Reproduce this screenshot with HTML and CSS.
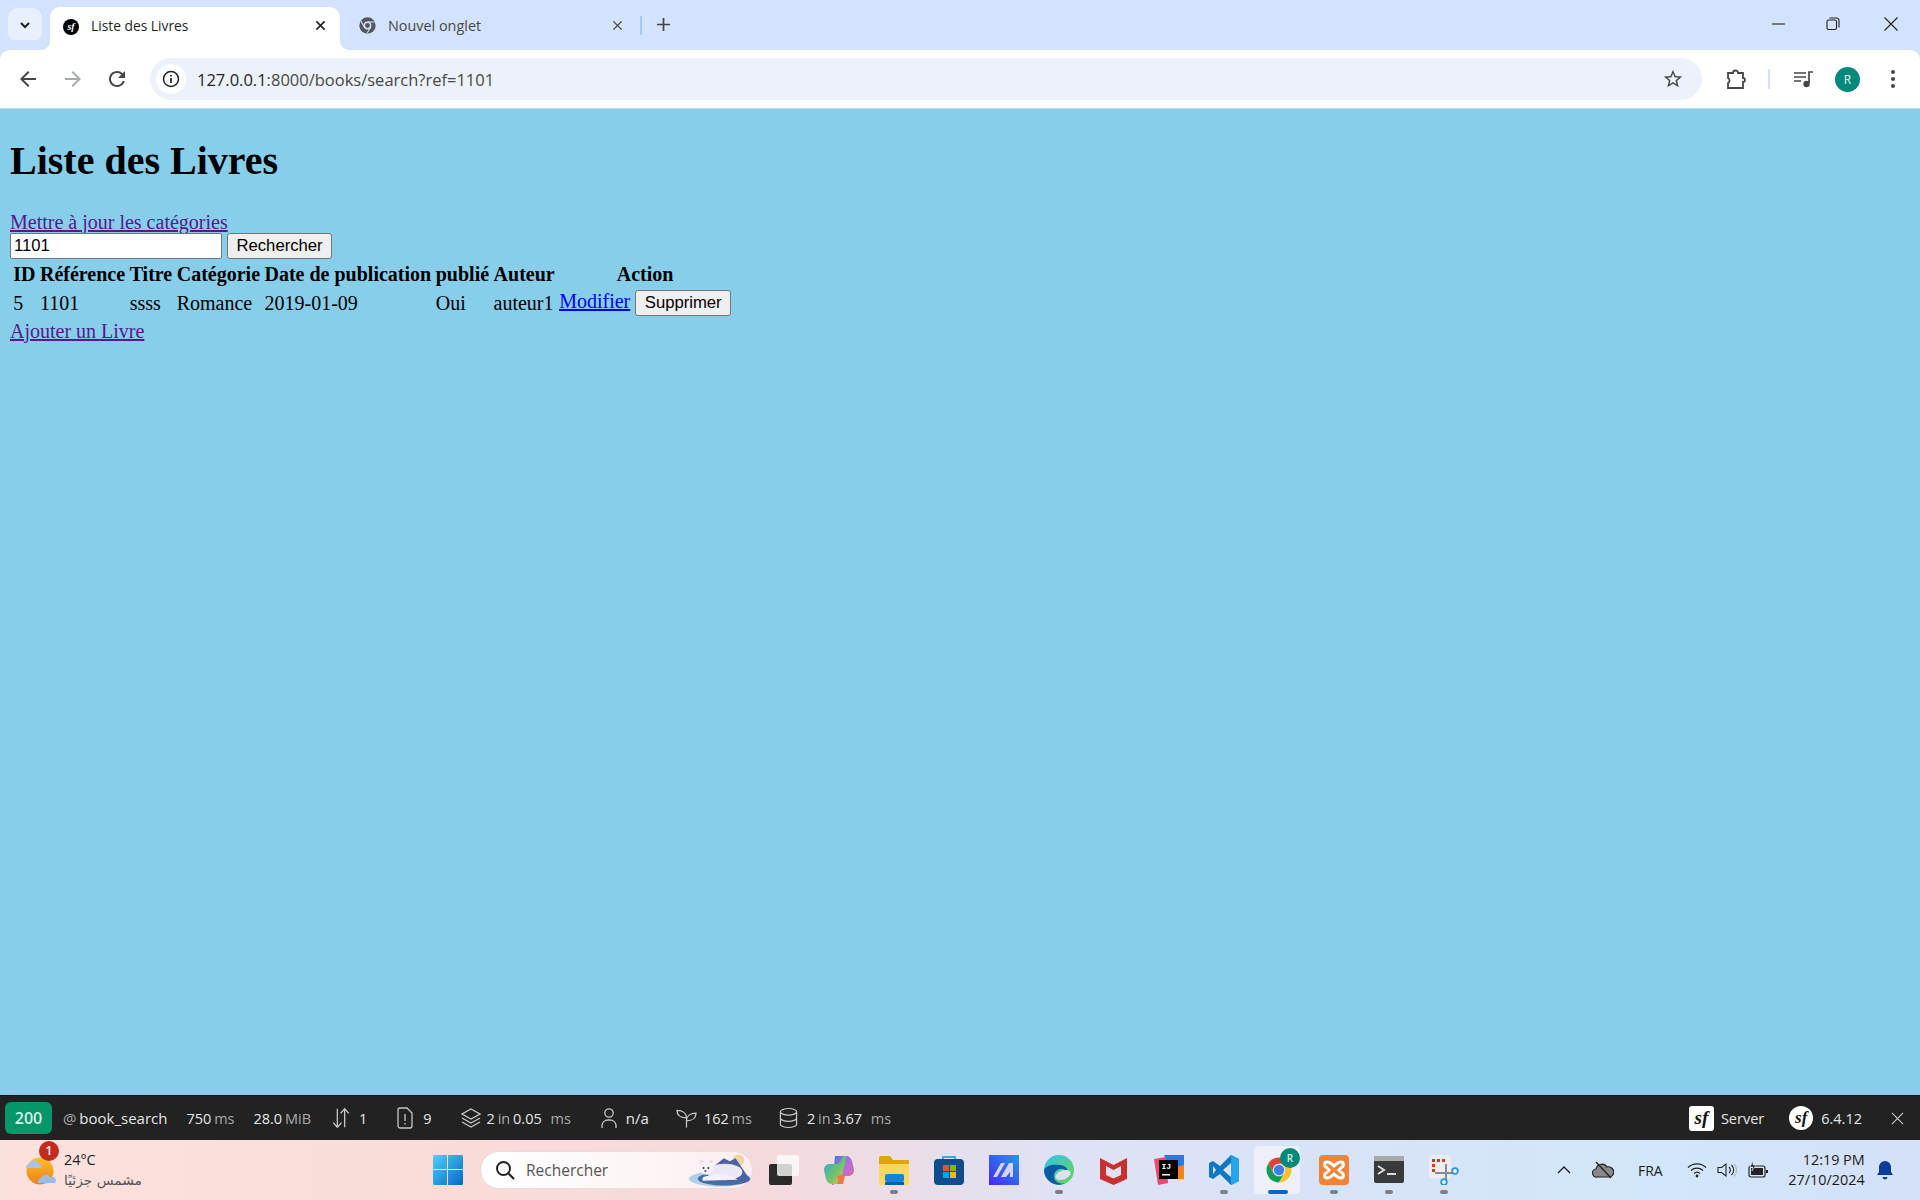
FILE: index.html
```html
<!DOCTYPE html>
<html lang="fr">
<head>
<meta charset="utf-8">
<title>Liste des Livres</title>
<link rel="stylesheet" href="styles.css">
</head>
<body>
<div class="tabstrip">
  <div class="tabsearch"><svg class="ic14" viewBox="0 0 14 14"><path d="M3 5l4 4 4-4" fill="none" stroke="#1f1f1f" stroke-width="2"/></svg></div>
  <div class="tab active">
    <span class="favicon">sf</span>
    <span class="tabtitle">Liste des Livres</span>
    <svg class="tabclose" viewBox="0 0 12 12"><path d="M1.5 1.5l9 9M10.5 1.5l-9 9" stroke="#1f1f1f" stroke-width="1.7"/></svg>
  </div>
  <div class="tab second">
    <svg class="chromefav" viewBox="0 0 24 24"><circle cx="12" cy="12" r="11.500" fill="#54585c"/><circle cx="12" cy="12" r="5.500" fill="#d3e3fd"/><circle cx="12" cy="12" r="3.500" fill="#54585c"/><path d="M12 7h10M7.700 14.500L2.800 6M16.300 14.500L11.400 23" stroke="#d3e3fd" stroke-width="1.500"/></svg>
    <span class="tabtitle dim">Nouvel onglet</span>
    <svg class="tabclose" viewBox="0 0 12 12"><path d="M1.5 1.5l9 9M10.5 1.5l-9 9" stroke="#474747" stroke-width="1.5"/></svg>
  </div>
  <span class="tabsep"></span>
  <svg class="newtab" viewBox="0 0 16 16"><path d="M8 1v14M1 8h14" stroke="#444" stroke-width="1.8"/></svg>
  <div class="winctl">
    <svg class="win" viewBox="0 0 14 14"><path d="M0 7h13" stroke="#222" stroke-width="1.1"/></svg>
    <svg class="win win2" viewBox="0 0 14 14"><rect x="1" y="3" width="9.5" height="9.5" rx="1.6" fill="none" stroke="#222" stroke-width="1.1"/><path d="M3.5 1h7A2.5 2.5 0 0 1 13 3.5v7" fill="none" stroke="#222" stroke-width="1.1"/></svg>
    <svg class="win win3" viewBox="0 0 14 14"><path d="M.5.5l13 13M13.500.5l-13 13" stroke="#222" stroke-width="1.1"/></svg>
  </div>
</div>

<div class="toolbar">
  <svg class="navic nav1" viewBox="0 0 24 24"><path fill="#474747" d="M20 11H7.830l5.590-5.590L12 4l-8 8 8 8 1.410-1.410L7.830 13H20v-2z"/></svg>
  <svg class="navic nav2" viewBox="0 0 24 24"><path fill="#a8abae" d="M12 4l-1.410 1.410L16.170 11H4v2h12.170l-5.580 5.590L12 20l8-8z"/></svg>
  <svg class="navic nav3" viewBox="0 0 24 24"><path fill="#474747" d="M17.650 6.350A7.958 7.958 0 0 0 12 4c-4.420 0-7.990 3.580-7.990 8s3.570 8 7.990 8c3.730 0 6.840-2.550 7.730-6h-2.080A5.990 5.990 0 0 1 12 18c-3.310 0-6-2.690-6-6s2.690-6 6-6c1.660 0 3.140.690 4.220 1.780L13 11h7V4l-2.350 2.350z"/></svg>
  <div class="omnibox">
    <span class="infowrap"><svg class="info" viewBox="0 0 18 18"><circle cx="9" cy="9" r="7.500" fill="none" stroke="#1f1f1f" stroke-width="1.500"/><path d="M9 8v5M9 5v1.600" stroke="#1f1f1f" stroke-width="1.700"/></svg></span>
    <span class="url">127.0.0.1<span class="urlrest">:8000/books/search?ref=1101</span></span>
    <svg class="star" viewBox="0 0 24 24"><path fill="#474747" d="M22 9.240l-7.190-.620L12 2 9.190 8.630 2 9.240l5.460 4.730L5.820 21 12 17.270 18.180 21l-1.630-7.030L22 9.240zM12 15.400l-3.760 2.270 1-4.280-3.320-2.880 4.380-.380L12 6.100l1.710 4.040 4.380.380-3.320 2.880 1 4.280L12 15.400z"/></svg>
  </div>
  <svg class="toolic ext" viewBox="0 0 22 22"><path fill="none" stroke="#474747" stroke-width="1.800" d="M3 5h5a2.500 2.500 0 0 1 5 0h5v5a2 2 0 0 1 0 4v6H3v-5a2.600 2.600 0 0 0 1.500-2.500A2.600 2.600 0 0 0 3 10z"/></svg>
  <span class="toolsep"></span>
  <svg class="toolic media" viewBox="0 0 22 22"><path d="M2 5h12M2 9h12M2 13h7" stroke="#474747" stroke-width="1.700"/><path d="M17 15V4h4" fill="none" stroke="#474747" stroke-width="1.700"/><circle cx="14.500" cy="16" r="3.200" fill="#474747"/></svg>
  <span class="avatar">R</span>
  <svg class="toolic dots" viewBox="0 0 22 22"><circle cx="11" cy="4" r="2" fill="#474747"/><circle cx="11" cy="11" r="2" fill="#474747"/><circle cx="11" cy="18" r="2" fill="#474747"/></svg>
</div>

<main class="page">
  <h1 class="title">Liste des Livres</h1>
  <a class="visited" href="#">Mettre à jour les catégories</a>
  <form class="search">
    <input class="field" type="text" value="1101">
    <button class="btn" type="button">Rechercher</button>
  </form>
  <table class="books">
    <thead>
      <tr><th>ID</th><th>Référence</th><th>Titre</th><th>Catégorie</th><th>Date de publication</th><th>publié</th><th>Auteur</th><th>Action</th></tr>
    </thead>
    <tbody>
      <tr>
        <td>5</td><td>1101</td><td>ssss</td><td>Romance</td><td>2019-01-09</td><td>Oui</td><td>auteur1</td>
        <td><a class="fresh" href="#">Modifier</a> <button class="btn" type="button">Supprimer</button></td>
      </tr>
    </tbody>
  </table>
  <a class="visited" href="#">Ajouter un Livre</a>
</main>

<div class="debugbar">
  <span class="status">200</span>
  <span class="route"><span class="lab">@</span> <b>book_search</b></span>
  <span class="dbg m19"><b>750</b> <span class="lab">ms</span></span>
  <span class="dbg m19"><b>28.0</b> <span class="lab">MiB</span></span>
  <svg class="dic w20 m20" viewBox="0 0 20 24"><path d="M6 2v20M1.500 17L6 22l4.500-5M14 22V2M9.500 7L14 2l4.500 5" fill="none" stroke="#c8c8c8" stroke-width="1.400"/></svg>
  <span class="dbg m8"><b>1</b></span>
  <svg class="dic w16 m30" viewBox="0 0 16 22"><path d="M1 3a2 2 0 0 1 2-2h7l5 5v13a2 2 0 0 1-2 2H3a2 2 0 0 1-2-2zM8 7v7M8 16v1.600" fill="none" stroke="#c8c8c8" stroke-width="1.300"/></svg>
  <span class="dbg m10"><b>9</b></span>
  <svg class="dic w20 m29" viewBox="0 0 20 22"><path d="M10 2l9 5-9 5-9-5zM1 11l9 5 9-5M1 15l9 5 9-5" fill="none" stroke="#c8c8c8" stroke-width="1.300"/></svg>
  <span class="dbg m6"><b>2</b> <span class="lab">in</span> <b>0.05</b> <span class="lab msgap">ms</span></span>
  <svg class="dic w16 m30" viewBox="0 0 16 22"><circle cx="8" cy="6" r="4.200" fill="none" stroke="#c8c8c8" stroke-width="1.300"/><path d="M1 21v-3a6 6 0 0 1 6-5h2a6 6 0 0 1 6 5v3" fill="none" stroke="#c8c8c8" stroke-width="1.300"/></svg>
  <span class="dbg m9 bigger"><b>n/a</b></span>
  <svg class="dic w21 m27" viewBox="0 0 22 22"><path d="M11 21V11C11 6 7 3 1 3c0 6 4 8 10 8M11 14c0-5 4-8 10-8 0 5-4 8-10 8" fill="none" stroke="#c8c8c8" stroke-width="1.300"/></svg>
  <span class="dbg m7"><b>162</b> <span class="lab">ms</span></span>
  <svg class="dic w19 m27" viewBox="0 0 20 22"><ellipse cx="10" cy="4.500" rx="8.500" ry="3.500" fill="none" stroke="#c8c8c8" stroke-width="1.300"/><path d="M1.500 4.500v13c0 2 4 3.500 8.500 3.500s8.500-1.500 8.500-3.500v-13M1.500 11c0 2 4 3.500 8.500 3.500s8.500-1.500 8.500-3.500" fill="none" stroke="#c8c8c8" stroke-width="1.300"/></svg>
  <span class="dbg m9"><b>2</b> <span class="lab">in</span> <b>3.67</b> <span class="lab msgap">ms</span></span>
  <span class="spacer"></span>
  <span class="sfsquare">sf</span>
  <span class="dbg m7">Server</span>
  <span class="sfround">sf</span>
  <span class="dbg m8">6.4.12</span>
  <svg class="dbgclose" viewBox="0 0 14 14"><path d="M1 1l12 12M13 1L1 13" stroke="#c8c8c8" stroke-width="1.200"/></svg>
</div>

<div class="taskbar">
  <div class="weather">
    <svg class="wicon" viewBox="0 0 31 31"><defs><linearGradient id="sun" x1="0" y1="0" x2="0" y2="1"><stop offset="0" stop-color="#fbc02d"/><stop offset="1" stop-color="#ee7f1c"/></linearGradient></defs><circle cx="15" cy="16" r="13.500" fill="url(#sun)"/><path d="M1 13a4 4 0 0 1 3-4 5 5 0 0 1 9-1 3.500 3.500 0 0 1 3 5z" fill="#a9c3ea"/><path d="M13 28a4 4 0 0 1 3-5 5 5 0 0 1 9-1 4 4 0 0 1 5 6z" fill="#9bbbe8"/></svg>
    <span class="wbadge">1</span>
    <div class="wtext"><span class="temp">24°C</span><span class="cond" dir="rtl" lang="ar">مشمس جزئيًا</span></div>
  </div>
  <svg class="winlogo" viewBox="0 0 30 30"><defs><linearGradient id="wl" x1="0" y1="0" x2="1" y2="1"><stop offset="0" stop-color="#4fd0fb"/><stop offset="1" stop-color="#0468c4"/></linearGradient></defs><path fill="url(#wl)" d="M0 1.500A1.500 1.500 0 0 1 1.500 0H14v14H0zM15 0h13.500A1.500 1.500 0 0 1 30 1.500V14H15zM0 15h14v15H1.500A1.500 1.500 0 0 1 0 28.500zM15 15h15v13.500a1.500 1.500 0 0 1-1.500 1.500H15z"/></svg>
  <div class="searchbox">
    <svg class="sicon" viewBox="0 0 20 20"><circle cx="8.500" cy="8.500" r="6.500" fill="none" stroke="#222" stroke-width="2"/><path d="M13.500 13.500L19 19" stroke="#222" stroke-width="2.200"/></svg>
    <span class="stext">Rechercher</span>
    <svg class="bear" viewBox="0 0 66 34"><ellipse cx="33" cy="26" rx="32" ry="8" fill="#b4cdeb"/><ellipse cx="37" cy="26" rx="27" ry="7" fill="#44709f"/><circle cx="52" cy="7" r="6" fill="#f1d3a6"/><path d="M27 13L37 5l6 3 6-3 15 22-3 2H30z" fill="#4b62a5"/><ellipse cx="38" cy="19" rx="18" ry="8.500" fill="#ece6f5"/><circle cx="19" cy="15" r="7" fill="#f6f2fa"/><circle cx="14" cy="8" r="1.800" fill="#e4ddec"/><circle cx="24" cy="8" r="1.800" fill="#e4ddec"/><circle cx="16" cy="15" r="1" fill="#333"/><circle cx="21" cy="15" r="1" fill="#333"/><circle cx="18" cy="18" r="1.100" fill="#5a4a55"/><path d="M15 25c8-4 15-5 30-2l6 4-36 1z" fill="#f4f0f8"/></svg>
  </div>
  <div class="apps">
    <span class="app"><svg class="appi" viewBox="0 0 30 30"><rect x="0" y="9" width="23" height="21" rx="2" fill="#2a2a2a"/><rect x="8" y="0" width="22" height="21" rx="2" fill="#fbfbfb" opacity=".8"/></svg></span>
    <span class="app"><svg class="appi" viewBox="0 0 30 30"><defs><linearGradient id="cp1" x1="0" y1="0" x2="1" y2="1"><stop offset="0" stop-color="#2aa5e8"/><stop offset=".55" stop-color="#6fc36b"/><stop offset="1" stop-color="#f5c43c"/></linearGradient><linearGradient id="cp2" x1="0" y1="0" x2="1" y2="1"><stop offset="0" stop-color="#3d7be8"/><stop offset=".5" stop-color="#b46be0"/><stop offset="1" stop-color="#f26878"/></linearGradient></defs><path fill="url(#cp2)" d="M11 1h11c3 0 5 2 6 5l2 9c0 4-3 6-6 6h-6c-3 0-4 2-5 4l-1 2c-1 2-2 3-4 3z"/><path fill="url(#cp1)" d="M19 29H8c-3 0-5-2-6-5L0 15c0-4 3-6 6-6h6c3 0 4-2 5-4l1-2c1-2 2-2 4-2L21 9c-2 6-3 9-2 20z"/><path d="M13 21c3-1 6-1 8 0l-2 8h-6c2-2 1-5 0-8z" fill="#f5734a"/></svg></span>
    <span class="app dot"><svg class="appi" viewBox="0 0 30 30"><path d="M0 3a2 2 0 0 1 2-2h9l3 4h16v24H0z" fill="#dfa50f"/><path d="M0 9h30v21H0z" fill="#fbd75b"/><rect x="6" y="19" width="19" height="8" rx="2" fill="#1583d8"/><rect x="6" y="27" width="19" height="3" fill="#0d5fa8"/></svg></span>
    <span class="app"><svg class="appi" viewBox="0 0 30 30"><path d="M9 5V2h12v3" fill="none" stroke="#3ca8e8" stroke-width="2"/><rect x="0" y="4" width="30" height="26" rx="4" fill="#0f4c8a"/><rect x="9" y="10" width="6" height="6" fill="#f25022"/><rect x="16" y="10" width="6" height="6" fill="#7fba00"/><rect x="9" y="17" width="6" height="6" fill="#00a4ef"/><rect x="16" y="17" width="6" height="6" fill="#ffb900"/></svg></span>
    <span class="app"><svg class="appi" viewBox="0 0 30 30"><defs><linearGradient id="ma" x1="0" y1="1" x2="1" y2="0"><stop offset="0" stop-color="#4a25f0"/><stop offset="1" stop-color="#1e9bf0"/></linearGradient></defs><rect width="30" height="30" fill="url(#ma)"/><path d="M4 22L12 8h4L8 22zM12 22l8-14h4v14h-3v-5l-4 5z" fill="#d6d2f8"/></svg></span>
    <span class="app dot"><svg class="appi" viewBox="0 0 30 30"><defs><linearGradient id="ed" x1="0" y1="0" x2="1" y2="1"><stop offset="0" stop-color="#35c1f1"/><stop offset="1" stop-color="#65d84c"/></linearGradient></defs><circle cx="15" cy="15" r="15" fill="url(#ed)"/><path d="M0 15A15 15 0 0 0 22 28c-6 2-12-1-12-7 0-5 5-8 8-7 2 0 6 2 6 2-1-4-5-6-9-6C9 9 2 10 0 15z" fill="#0c59a4"/><ellipse cx="19" cy="20" rx="8" ry="4.500" fill="#dfe1f3" transform="rotate(-20 19 20)"/></svg></span>
    <span class="app"><svg class="appi narrow" viewBox="0 0 27 30"><path d="M0 3l13.500 7L27 3v21l-13.500 6L0 24z" fill="#c8312f"/><path d="M6 11l7.500 4 7.500-4v9l-7.500 3.500L6 20z" fill="#dfe1f3"/></svg></span>
    <span class="app"><svg class="appi" viewBox="0 0 30 30"><path d="M10 0h20v22l-10 2z" fill="#1f7fe8"/><path d="M0 4l12-2 2 26-10 2z" fill="#f0476f"/><path d="M22 24h8V10l-8 2z" fill="#f58220"/><rect x="5" y="5" width="19" height="19" fill="#000"/><text class="ijtext" x="7.500" y="14">IJ</text><rect x="8" y="19" width="8" height="1.500" fill="#fff"/></svg></span>
    <span class="app dot"><svg class="appi" viewBox="0 0 30 30"><path d="M22 0l8 4v22l-8 4-11-11-7 5-4-2V8l4-2 7 5z" fill="#0e78c4"/><path d="M22 0l8 4v22l-8 4z" fill="#25a5ee"/><path d="M22 8v14l-8-7z" fill="#dfe1f3"/><path d="M4 11v8l3-4z" fill="#dfe1f3"/></svg></span>
    <span class="app current">
      <svg class="appi" viewBox="0 0 24 24"><path fill="#db4437" d="M12 2A10 10 0 0 0 3.340 7l4.330 7.500A5 5 0 0 1 12 7h8.660A10 10 0 0 0 12 2z"/><path fill="#0f9d58" d="M3.340 7A10 10 0 0 0 12 22l4.330-7.500a5 5 0 0 1-8.660 0z"/><path fill="#fbc02d" d="M20.660 7H12a5 5 0 0 1 4.330 7.500L12 22a10 10 0 0 0 8.660-15z"/><circle cx="12" cy="12" r="4.200" fill="#3b7ff0"/></svg>
      <span class="chromebadge">R</span>
    </span>
    <span class="app dot"><svg class="appi" viewBox="0 0 30 30"><rect width="30" height="30" rx="4" fill="#f08336"/><path d="M8 7c3 0 5 2 7 4 2-2 4-4 7-4s3 4 1 5l-3 3 3 3c2 1 2 5-1 5s-5-2-7-4c-2 2-4 4-7 4s-3-4-1-5l3-3-3-3C5 11 5 7 8 7z" fill="none" stroke="#fff" stroke-width="3"/></svg></span>
    <span class="app dot"><svg class="appi" viewBox="0 0 30 30"><rect y="1" width="30" height="27" rx="2" fill="#3a3a3a"/><rect y="1" width="30" height="5" fill="#a9a9a9"/><path d="M4 11l6 4-6 4" fill="none" stroke="#ddd" stroke-width="2"/><rect x="13" y="18" width="9" height="2" fill="#ddd"/></svg></span>
    <span class="app dot"><svg class="appi" viewBox="0 0 30 30"><rect width="22" height="23" rx="3" fill="#ecedf2"/><path d="M3 4h3v3H3zM8 4h3v3H8zM13 4h3v3h-3zM3 9h3v3H3zM3 14h3v3H3z" fill="#d2391f"/><path d="M6 18h18M17 9v17" stroke="#8a8a8a" stroke-width="2"/><circle cx="26" cy="16" r="2.800" fill="#fff" stroke="#2196e8" stroke-width="1.800"/><circle cx="15" cy="27" r="2.800" fill="#fff" stroke="#2196e8" stroke-width="1.800"/></svg></span>
  </div>
  <div class="tray">
    <svg class="tr chev" viewBox="0 0 14 8"><path d="M1 7l6-6 6 6" fill="none" stroke="#222" stroke-width="1.400"/></svg>
    <svg class="tr cloud" viewBox="0 0 22 18"><path d="M5 16a4 4 0 0 1-1-8 6 6 0 0 1 11-2 5 5 0 0 1 3 10z" fill="#888" stroke="#222" stroke-width="1.200"/><path d="M4 1l15 16" stroke="#222" stroke-width="1.300"/></svg>
    <span class="lang">FRA</span>
    <svg class="tr wifi" viewBox="0 0 20 16"><path d="M1 5.500a13 13 0 0 1 18 0M4 8.500a9 9 0 0 1 12 0M7 11.500a4.500 4.500 0 0 1 6 0" fill="none" stroke="#222" stroke-width="1.200"/><circle cx="10" cy="14" r="1.400" fill="#222"/></svg>
    <svg class="tr vol" viewBox="0 0 20 16"><path d="M1 5.500h3.500L9 2v12L4.500 10.500H1z" fill="none" stroke="#222" stroke-width="1.100"/><path d="M12 5a4 4 0 0 1 0 6M14.500 3a7 7 0 0 1 0 10" fill="none" stroke="#222" stroke-width="1.100"/><path d="M17 1.500a10 10 0 0 1 0 13" fill="none" stroke="#aaa" stroke-width="1"/></svg>
    <svg class="tr batt" viewBox="0 0 20 18"><rect x="1" y="5" width="16" height="11" rx="2" fill="none" stroke="#222" stroke-width="1.200"/><rect x="3" y="7" width="12" height="7" fill="#222"/><rect x="18" y="9" width="2" height="3" fill="#222"/><path d="M5 0L2 6h3L4 10l4-6H5z" fill="#222" stroke="#dbe6fa" stroke-width=".6"/></svg>
    <div class="clock"><span>12:19 PM</span><span>27/10/2024</span></div>
    <svg class="tr bell" viewBox="0 0 18 20"><path d="M9 1a6 6 0 0 0-6 6v5l-2 3h16l-2-3V7a6 6 0 0 0-6-6z" fill="#0a3d99"/><path d="M6.500 17a2.500 2.500 0 0 0 5 0z" fill="#0a3d99"/></svg>
  </div>
</div>
</body>
</html>
```
FILE: styles.css
```css
* { box-sizing: border-box; }
html, body { height: 100%; margin: 0; }
body {
  display: flex;
  flex-direction: column;
  height: 1200px;
  overflow: hidden;
  font-family: "Liberation Serif", serif;
  background: #87ceeb;
}

/* tab strip */
.tabstrip {
  height: 50px;
  flex: none;
  display: flex;
  align-items: flex-start;
  background: #d3e3fd;
  padding-left: 8px;
  font-family: "Open Sans", sans-serif;
  font-size: 14px;
}
.tabsearch {
  width: 34px; height: 34px; margin-top: 8px;
  border-radius: 10px; background: #e9f0fd;
  display: flex; align-items: center; justify-content: center;
}
.ic14 { width: 14px; height: 14px; }
.tab {
  position: relative;
  height: 43px; margin-top: 7px; padding-bottom: 6px;
  display: flex; align-items: center;
  border-radius: 10px 10px 0 0;
}
.tab.active { width: 290px; margin-left: 8px; background: #fff; padding-left: 13px; padding-right: 14px; }
.tab.active::before, .tab.active::after {
  content: ""; position: absolute; bottom: 0; width: 10px; height: 10px;
}
.tab.active::before { left: -10px; background: radial-gradient(circle at 0 0, #d3e3fd 10px, #fff 10.5px); }
.tab.active::after { right: -10px; background: radial-gradient(circle at 100% 0, #d3e3fd 10px, #fff 10.5px); }
.tab.second { width: 300px; padding-left: 19px; padding-right: 17px; }
.favicon {
  width: 16px; height: 16px; border-radius: 50%; margin-top: 2px;
  background: #000; color: #fff;
  font: italic bold 10px/16px "Liberation Serif", serif;
  text-align: center; flex: none;
}
.chromefav { width: 17px; height: 17px; flex: none; }
.tabtitle { margin-left: 12px; flex: 1; color: #1f1f1f; white-space: nowrap; font-size: 13.8px; }
.tabtitle.dim { color: #474747; margin-left: 12px; font-size: 14.4px; }
.tabclose { width: 11px; height: 11px; flex: none; }
.tabsep { width: 2px; height: 19px; margin-top: 16px; background: #a8c7fa; flex: none; }
.newtab { width: 15px; height: 15px; margin-top: 17px; margin-left: 14px; }
.winctl { margin-left: auto; display: flex; padding-top: 17px; padding-right: 22px; }
.win { width: 14px; height: 14px; }
.win2 { margin-left: 40px; }
.win3 { margin-left: 44px; }

/* toolbar */
.toolbar {
  height: 59px; flex: none;
  background: #fff;
  display: flex; align-items: center;
  border-radius: 10px 10px 0 0;
  border-bottom: 1px solid #b5dcef;
  box-shadow: 0 -10px 0 #d3e3fd;
}
.navic { width: 24px; height: 24px; flex: none; }
.nav1 { margin-left: 16px; }
.nav2 { margin-left: 21px; }
.nav3 { margin-left: 20px; }
.omnibox {
  margin-left: 21px;
  width: 1552px; height: 42px;
  background: #edf2fa;
  border-radius: 21px;
  display: flex; align-items: center;
  padding-left: 6px; padding-right: 18px;
}
.infowrap {
  width: 30px; height: 30px; border-radius: 50%; background: #fff;
  display: flex; align-items: center; justify-content: center; flex: none;
}
.info { width: 18px; height: 18px; }
.url {
  margin-left: 11px; flex: 1;
  font-family: "Open Sans", sans-serif;
  font-size: 16.5px; color: #1f1f1f; white-space: nowrap;
}
.urlrest { color: #474747; }
.star { width: 22px; height: 22px; flex: none; }
.toolic { width: 22px; height: 22px; flex: none; }
.ext { margin-left: 23px; }
.toolsep { width: 2px; height: 20px; background: #d3e3fd; margin-left: 21px; flex: none; }
.media { margin-left: 22px; }
.avatar {
  width: 25px; height: 25px; border-radius: 50%;
  background: #00897b; color: #e6f3f1;
  font: 12px/25px "Open Sans", sans-serif;
  text-align: center; margin-left: 21px; flex: none;
}
.dots { margin-left: 22px; }

/* page content, browser zoom 125% */
.page {
  flex: 1; min-height: 0;
  background: #87ceeb;
  padding: 1px 10px 10px;
  font-size: 20px;
  color: #000;
}
.title { font-size: 40px; margin: 26.8px 0; font-weight: bold; }
.visited { color: #551a8b; }
.fresh { color: #0000ee; }
.search { display: flex; gap: 5px; height: 26px; margin-top: -1px; margin-bottom: 1px; }
.field {
  width: 212px; height: 26px;
  border: 1px solid #767676; border-radius: 2px;
  background: #fff; padding: 1px 3px;
  font: 16.67px "Liberation Sans", sans-serif;
  color: #000;
}
.btn {
  height: 26px; padding: 0 8.5px;
  background: #efefef;
  border: 1px solid #767676; border-radius: 3px;
  font: 16.67px "Liberation Sans", sans-serif;
  color: #000;
}
.books { border-collapse: separate; border-spacing: 2.5px; }
.books th, .books td { padding: 1.25px; font-size: 20px; white-space: nowrap; }
.books td { text-align: left; }

/* symfony bar */
.debugbar {
  height: 45px; flex: none;
  background: #222;
  border-top: 1px solid #111;
  display: flex; align-items: center;
  font-family: "Open Sans", sans-serif;
  font-size: 14.5px;
  word-spacing: -1px;
  color: #e6e6e6;
  white-space: nowrap;
}
.debugbar b { font-weight: 500; }
.lab { color: #aaa; }
.status {
  width: 47px; height: 32px; margin-left: 5px;
  background: #059669; border-radius: 6px;
  color: #dcefe8; font-weight: 600; font-size: 16px;
  line-height: 32px; text-align: center;
}
.route { margin-left: 11px; font-size: 15px; }
.bigger { font-size: 15px; }
.msgap { margin-left: 6px; }
.dic { height: 22px; flex: none; }
.w20 { width: 20px; } .w16 { width: 16px; } .w21 { width: 21px; } .w19 { width: 19px; }
.m6 { margin-left: 6px; } .m7 { margin-left: 7px; } .m8 { margin-left: 8px; } .m9 { margin-left: 9px; } .m10 { margin-left: 10px; }
.m19 { margin-left: 19px; } .m20 { margin-left: 20px; } .m27 { margin-left: 27px; } .m29 { margin-left: 29px; } .m30 { margin-left: 30px; }
.spacer { flex: 1; }
.sfsquare {
  width: 25px; height: 25px; background: #fff; border-radius: 3px; color: #111;
  font: italic bold 19px/24px "Liberation Serif", serif; text-align: center; flex: none;
}
.sfround {
  width: 24px; height: 24px; background: #fff; border-radius: 50%; color: #111;
  font: italic bold 17px/23px "Liberation Serif", serif; text-align: center; flex: none; margin-left: 25px;
}
.dbgclose { width: 13px; height: 13px; margin-left: 29px; margin-right: 16px; flex: none; }

/* windows taskbar */
.taskbar {
  height: 60px; flex: none;
  display: flex; align-items: center;
  background: linear-gradient(90deg, #fbe1dc 0%, #f9dcd8 25%, #f5dadd 40%, #dfe2f4 55%, #d8e3f7 70%, #d2e6fa 85%, #d4e1f9 100%);
  font-family: "Open Sans", sans-serif;
}
.weather { position: relative; display: flex; align-items: center; margin-left: 25px; width: 408px; }
.wicon { width: 31px; height: 31px; flex: none; }
.wbadge {
  position: absolute; left: 14px; top: -9px;
  width: 20px; height: 20px; border-radius: 50%;
  background: #c42b1c; color: #fff; font-size: 12px; font-weight: 600;
  line-height: 20px; text-align: center;
}
.wtext { display: flex; flex-direction: column; margin-left: 8px; }
.temp { font-size: 14.4px; line-height: 20px; color: #1a1a1a; }
.cond { font: 13.8px/20px "DejaVu Sans", sans-serif; color: #555; }
.winlogo { width: 30px; height: 30px; flex: none; }
.searchbox {
  width: 273px; height: 38px; margin-left: 17px; flex: none;
  background: linear-gradient(90deg, #fff, #fbeef0);
  border-radius: 19px;
  border: 1px solid #e8dcdc;
  display: flex; align-items: center; padding-left: 14px;
  position: relative;
}
.sicon { width: 20px; height: 20px; flex: none; }
.stext { margin-left: 11px; font-size: 15.5px; color: #555; }
.bear { position: absolute; right: 0; top: 1px; width: 64px; height: 34px; }
.apps { display: flex; margin-left: 3px; }
.app {
  position: relative; width: 55px; height: 48px; flex: none;
  display: flex; align-items: center; justify-content: center;
}
.appi { width: 30px; height: 30px; }
.appi.narrow { width: 27px; }
.dot::after {
  content: ""; position: absolute; bottom: 0; left: 50%; margin-left: -4px;
  width: 8px; height: 4px; border-radius: 2px; background: #7b7f88;
}
.current { width: 46px; margin: 0 6px 0 3px; padding-left: 3px; background: #edf0fa; border-radius: 4px; }
.current::after {
  content: ""; position: absolute; bottom: 0; left: 50%; margin-left: -9px;
  width: 20px; height: 4px; border-radius: 2px; background: #0067c0;
}
.chromebadge {
  position: absolute; right: 0; top: 2px;
  width: 20px; height: 20px; border-radius: 50%;
  background: #00897b; color: #d8eeea;
  font-size: 10px; font-weight: 600; line-height: 20px; text-align: center;
}
.ijtext { font: bold 8px "Liberation Mono", monospace; fill: #fff; }
.tray { display: flex; align-items: center; margin-left: 86px; }
.tr { flex: none; }
.chev { width: 14px; height: 8px; }
.cloud { width: 22px; height: 18px; margin-left: 21px; }
.lang { font-size: 14px; color: #1a1a1a; margin-left: 24px; }
.wifi { width: 20px; height: 16px; margin-left: 24px; }
.vol { width: 20px; height: 16px; margin-left: 10px; }
.batt { width: 20px; height: 18px; margin-left: 11px; }
.clock { display: flex; flex-direction: column; align-items: flex-end; margin-left: 19px; font-size: 14.4px; line-height: 20px; color: #1a1a1a; width: 78px; }
.bell { width: 18px; height: 20px; margin-left: 11px; }
```
